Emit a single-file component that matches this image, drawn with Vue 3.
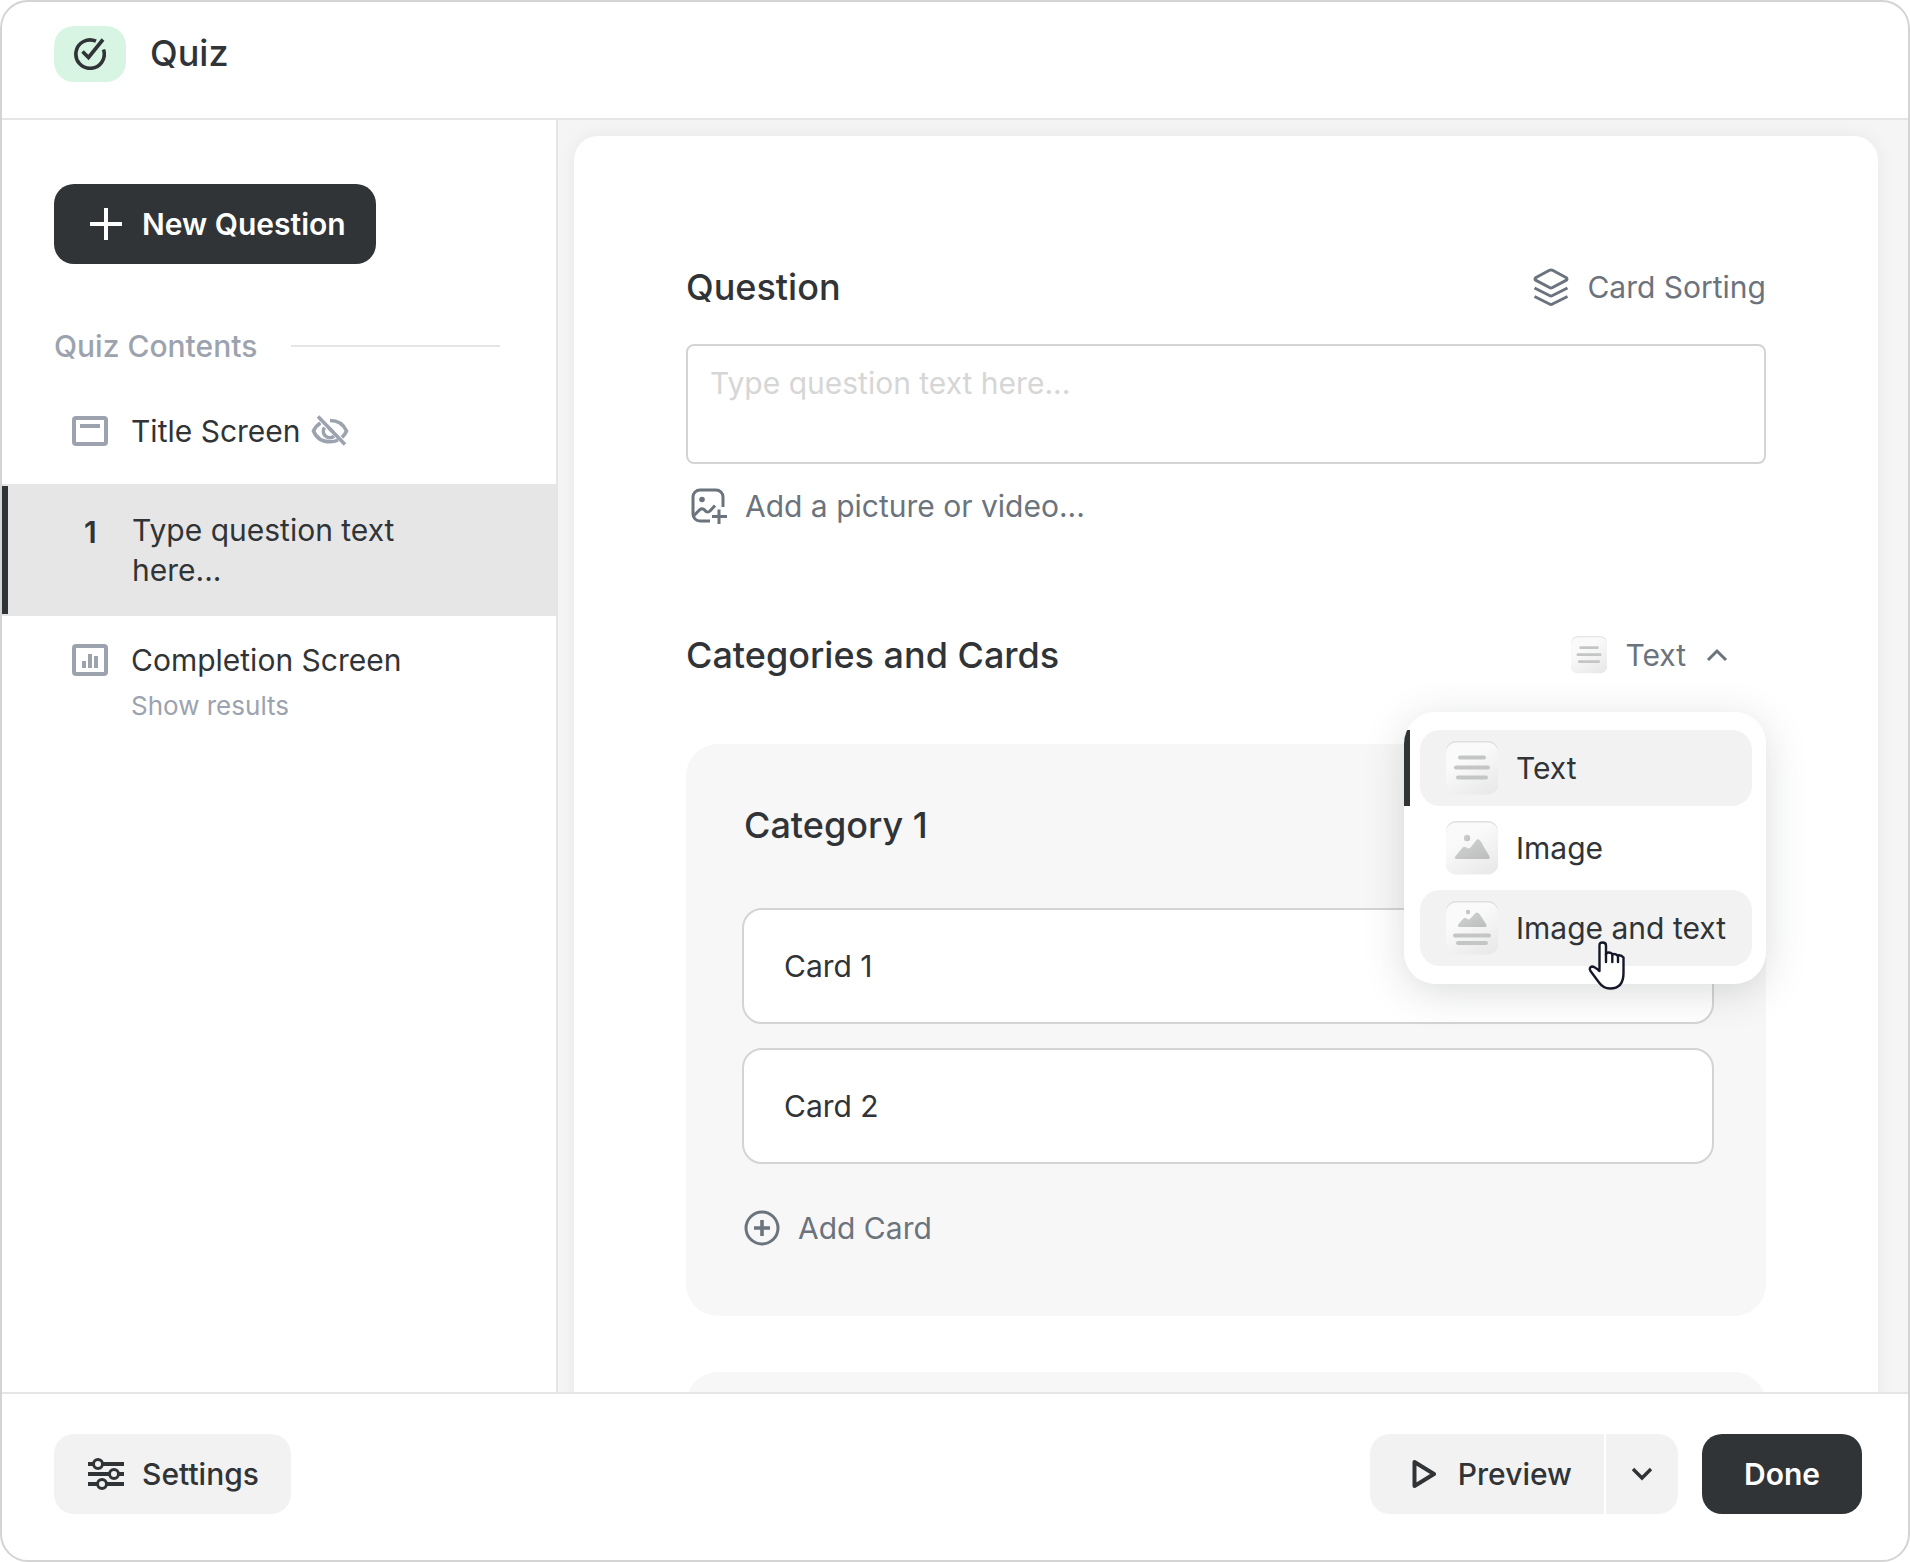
<script setup>
import { ref } from 'vue'

const questionText = ref('')
const cards = ref(['Card 1', 'Card 2'])
const modes = [
  { id: 'text', label: 'Text' },
  { id: 'image', label: 'Image' },
  { id: 'both', label: 'Image and text' },
]
const selectedMode = ref('text')
const hoveredMode = ref('both')
</script>

<template>
  <div class="app">
    <svg class="defs" aria-hidden="true">
      <defs>
        <linearGradient id="tile" x1="0.2" y1="0" x2="0.8" y2="1">
          <stop offset="0.3" stop-color="#fafafa" />
          <stop offset="1" stop-color="#e9e9e9" />
        </linearGradient>
        <linearGradient id="ink" x1="0" y1="0" x2="1" y2="1">
          <stop offset="0" stop-color="#d2d4d3" />
          <stop offset="1" stop-color="#bcbebd" />
        </linearGradient>
        <g id="tile-bg">
          <rect x="0" y="0" width="52" height="53" rx="10" fill="#dfdfdf" />
          <rect x="0" y="1.500" width="52" height="52" rx="10" fill="url(#tile)" />
        </g>
        <g id="tile-text" fill="#c4c6c5">
          <rect x="12" y="14.500" width="28" height="4" rx="2" />
          <rect x="8" y="24.500" width="36" height="4" rx="2" />
          <rect x="10" y="34.500" width="32" height="4" rx="2" />
        </g>
        <g id="tile-image" fill="url(#ink)">
          <circle cx="21" cy="17" r="3.2" />
          <path d="M10.500 38C9 38 8.400 36.800 9.200 35.600L16 27.300Q18 25 20 26.300Q23 28.800 25 26L30 19.500Q32 17 34 19.500Q36 21.500 37 24.500L43 34.500Q45 38 42 38Z" />
        </g>
        <g id="tile-both">
          <circle cx="22" cy="11" r="2.200" fill="#c4c6c5" />
          <path fill="url(#ink)" d="M13.500 26Q11 26 12.500 23L17.500 17.500Q19 16 20.500 17.500Q23 19.500 25 17L29.500 12Q31.500 10.500 33.500 13L40 23Q41.500 26 39 26Z" />
          <rect x="7" y="32.500" width="38" height="4" rx="2" fill="#c4c6c5" />
          <rect x="10" y="40" width="32" height="4" rx="2" fill="#c4c6c5" />
        </g>
      </defs>
    </svg>

    <header class="topbar">
      <span class="badge">
        <svg width="32" height="32" viewBox="0 0 32 32" fill="none" stroke="#303437" stroke-width="3.600">
          <path d="M22 3.200A14.200 14.200 0 1 0 29.500 11.500" />
          <path d="M8.500 13.500L14.500 19.500L29 1.500" />
        </svg>
      </span>
      <h1>Quiz</h1>
    </header>

    <div class="body">
      <aside class="sidebar">
        <button type="button" class="btn dark new">
          <svg width="32" height="32" viewBox="0 0 32 32" stroke="#fff" stroke-width="4"><path d="M16 0V32M0 16H32" /></svg>
          New Question
        </button>
        <h2 class="contents">Quiz Contents</h2>
        <nav>
          <a href="#title" class="item">
            <span class="lead">
              <svg width="36" height="30" viewBox="0 0 36 30" fill="none" stroke="#9ca3af" stroke-width="4">
                <rect x="2" y="2" width="32" height="26" rx="2" /><path d="M8 10H28" />
              </svg>
            </span>
            <span class="label">Title Screen</span>
            <svg class="eye" width="38" height="32" viewBox="0 0 38 32" fill="none" stroke="#9ca3af" stroke-width="3.600">
              <path d="M19 5.500C28 5.500 33 10.500 35.500 16C34.500 18.500 33 20.500 31 22.500" />
              <path d="M9.500 8C6 10.200 3.800 13 2.500 16C5 22 10.500 26.800 19 26.800C22 26.800 24.800 26.200 27 25" />
              <path d="M13.500 12.500A6.500 6.500 0 0 0 23 21.200" />
              <path d="M18 13L22 17" />
              <path d="M7 1.500L34 29.500" />
            </svg>
          </a>
          <a href="#q1" class="item current">
            <span class="lead num">1</span>
            <span class="label">Type question text here...</span>
          </a>
          <a href="#done" class="item">
            <span class="lead">
              <svg width="36" height="32" viewBox="0 0 36 32" fill="none" stroke="#9ca3af" stroke-width="4">
                <rect x="2" y="2" width="32" height="28" rx="2" /><path d="M12 17V24M18 10V24M24 12V24" />
              </svg>
            </span>
            <span class="label">Completion Screen<small>Show results</small></span>
          </a>
        </nav>
      </aside>

      <main class="main">
        <div class="panel">
          <div class="row">
            <label class="title" for="question">Question</label>
            <button type="button" class="link">
              <svg width="36" height="38" viewBox="0 0 36 38" fill="none" stroke="#6b737d" stroke-width="3" stroke-linejoin="round">
                <path d="M16.500 2.300Q18 1.500 19.500 2.300L33 9.500Q35 11 33 12.400L19.500 19.500Q18 20.300 16.500 19.500L3 12.400Q1 11 3 9.500Z" />
                <path d="M1.500 20L16.500 27.500Q18 28.300 19.500 27.500L34.500 20" />
                <path d="M1.500 28.500L16.500 36Q18 36.800 19.500 36L34.500 28.500" />
              </svg>
              Card Sorting
            </button>
          </div>
          <textarea id="question" v-model="questionText" placeholder="Type question text here..."></textarea>
          <button type="button" class="link media">
            <svg width="36" height="36" viewBox="0 0 36 36" fill="none" stroke="#6b737d" stroke-width="3">
              <path d="M19 33H9A7 7 0 0 1 2 26V9A7 7 0 0 1 9 2H25A7 7 0 0 1 32 9V19" />
              <path d="M3 27.500L9 21.500Q11 20 13 21.500L15 23.500Q17 24.800 19 23L24 17.500" />
              <circle cx="11" cy="11.500" r="2.800" fill="#6b737d" stroke="none" />
              <path d="M28 21.500V36M21 28.500H36" />
            </svg>
            Add a picture or video...
          </button>

          <div class="row second">
            <h2 class="title">Categories and Cards</h2>
            <div class="picker">
              <button type="button" class="link toggle" aria-haspopup="listbox" aria-expanded="true">
                <svg width="36" height="38" viewBox="0 0 52 54"><use href="#tile-bg" /><use href="#tile-text" /></svg>
                Text
                <svg class="caret" width="22" height="14" viewBox="0 0 22 14" fill="none" stroke="#6b737d" stroke-width="3"><path d="M2 12L11 3L20 12" /></svg>
              </button>
              <div class="popup">
                <ul class="menu">
                  <li v-for="m in modes" :key="m.id" :class="{ selected: m.id === selectedMode }">
                    <button
                      type="button"
                      class="option"
                      :class="{ lit: m.id === selectedMode || m.id === hoveredMode }"
                      @click="selectedMode = m.id"
                      @mouseenter="hoveredMode = m.id"
                    >
                      <svg width="52" height="54" viewBox="0 0 52 54"><use href="#tile-bg" /><use :href="'#tile-' + m.id" /></svg>
                      {{ m.label }}
                    </button>
                  </li>
                </ul>
                <svg class="pointer" width="38" height="49" viewBox="0 0 38 49" fill="#fff" stroke="#15172b" stroke-width="2.400" stroke-linejoin="round" stroke-linecap="round">
                  <path d="M11.500 27.500V4.500Q11.500 1.500 14.500 1.500Q18 1.500 18 4.500V13.500Q18 11.500 20.500 11.500Q23.500 11.500 24.500 13.500Q27 12.300 29.500 14.500Q33 13.500 35.500 16.500V32Q35.500 47.500 22 47.500Q15.500 47.500 11 41.500L2.500 30Q0.500 26.500 4 25.500Q6.500 25.500 11.500 30Z" />
                  <path d="M18 13V21M24.300 14V21M30 15V21" fill="none" />
                </svg>
              </div>
            </div>
          </div>

          <section class="category">
            <h3 class="title">Category 1</h3>
            <div class="cards">
              <input v-for="(c, i) in cards" :key="i" v-model="cards[i]" type="text" class="card" :aria-label="'Card ' + (i + 1) + ' text'" />
            </div>
            <button type="button" class="link">
              <svg width="36" height="36" viewBox="0 0 36 36" fill="none" stroke="#6b737d" stroke-width="3"><circle cx="18" cy="18" r="16" /><path d="M18 10V26M10 18H26" stroke-width="3.600" /></svg>
              Add Card
            </button>
          </section>
          <section class="category"></section>
        </div>
      </main>
    </div>

    <footer class="bottombar">
      <button type="button" class="btn settings">
        <svg width="36" height="32" viewBox="0 0 36 32" stroke="#303437" stroke-width="4">
          <path d="M0 6H36M0 16H36M0 26H36" />
          <g fill="#f2f2f2" stroke-width="3"><circle cx="10" cy="6" r="4.500" /><circle cx="26" cy="16" r="4.500" /><circle cx="14" cy="26" r="4.500" /></g>
        </svg>
        Settings
      </button>
      <div class="actions">
        <div class="split">
          <button type="button" class="btn preview">
            <svg width="24" height="30" viewBox="0 0 24 30" fill="none" stroke="#303437" stroke-width="4" stroke-linejoin="round"><path d="M2.500 3V27L22 15Z" /></svg>
            Preview
          </button>
          <button type="button" class="btn more" aria-label="Preview options">
            <svg width="22" height="14" viewBox="0 0 22 14" fill="none" stroke="#303437" stroke-width="3.400"><path d="M2 2L11 11L20 2" /></svg>
          </button>
        </div>
        <button type="button" class="btn dark finish">Done</button>
      </div>
    </footer>
  </div>
</template>

<style>
body {
  background: #fff;
}
</style>

<style scoped>
.app,
.app * {
  box-sizing: border-box;
}
.app {
  display: flex;
  flex-direction: column;
  height: 100vh;
  border: 2px solid #d4d4d4;
  border-radius: 28px;
  overflow: hidden;
  background: #fff;
  color: #303437;
  font-family: Inter, "Liberation Sans", sans-serif;
  font-size: 30px;
  line-height: 40px;
}
.defs {
  position: absolute;
  width: 0;
  height: 0;
}
h1,
h2,
h3,
ul {
  margin: 0;
  padding: 0;
  list-style: none;
}
svg {
  flex: none;
  display: block;
}
button {
  display: flex;
  align-items: center;
  border: 0;
  padding: 0;
  background: none;
  color: inherit;
  font: inherit;
  cursor: pointer;
  white-space: nowrap;
}
.topbar {
  display: flex;
  align-items: flex-start;
  gap: 24px;
  padding: 24px 52px 36px;
  border-bottom: 2px solid #e5e5e5;
}
.badge {
  display: flex;
  align-items: center;
  justify-content: center;
  width: 72px;
  height: 56px;
  border-radius: 20px;
  background: #d8f5e4;
}
h1 {
  font-size: 36px;
  font-weight: 500;
  line-height: 54px;
}
.body {
  display: flex;
  flex: 1;
  min-height: 0;
}
.sidebar {
  flex: 0 0 556px;
  border-right: 2px solid #e5e5e5;
  padding-top: 64px;
}
.btn {
  height: 80px;
  border-radius: 20px;
  background: #f2f2f2;
  font-weight: 500;
}
.dark {
  background: #303437;
  color: #fff;
  font-weight: 600;
}
.new {
  gap: 20px;
  margin-left: 52px;
  padding: 0 30px 0 36px;
}
.contents {
  display: flex;
  align-items: center;
  gap: 34px;
  margin: 62px 56px 0 52px;
  color: #9ca3af;
  font-size: 30px;
  font-weight: 500;
}
.contents::after {
  content: "";
  flex: 1;
  height: 2px;
  background: #e5e5e5;
}
.item {
  display: flex;
  align-items: flex-start;
  padding: 24px 40px 24px 70px;
  color: inherit;
  text-decoration: none;
}
.item:first-child {
  padding: 45px 40px 33px 70px;
}
.lead {
  display: flex;
  align-items: center;
  width: 59px;
  height: 40px;
  flex: none;
}
.eye {
  margin: 4px 0 0 10px;
}
.item.current {
  position: relative;
  padding: 26px 120px 26px 70px;
  background: #e6e6e6;
}
.current::before {
  content: "";
  position: absolute;
  inset: 2px auto 2px 0;
  width: 6px;
  background: #303437;
}
.current .num {
  width: 60px;
  height: 44px;
  padding-left: 12px;
  font-weight: 600;
}
small {
  display: block;
  margin-top: 6px;
  color: #9ca3af;
  font-size: 26px;
}
.main {
  flex: 1;
  min-width: 0;
  overflow: hidden;
  padding: 16px 30px 0 16px;
  background: #f5f5f5;
}
.panel {
  min-height: 100%;
  padding: 129px 112px 0;
  border-radius: 24px 24px 0 0;
  background: #fff;
  box-shadow: 0 0 20px rgba(0, 0, 0, 0.06);
}
.row {
  display: flex;
  align-items: center;
  justify-content: space-between;
}
.title {
  font-size: 36px;
  font-weight: 500;
  line-height: 44px;
}
.link {
  gap: 18px;
  color: #6b737d;
}
textarea {
  display: block;
  width: 100%;
  height: 120px;
  margin: 35px 0 22px;
  padding: 17px 22px;
  border: 2px solid #d4d4d4;
  border-radius: 8px;
  color: inherit;
  font: inherit;
  resize: none;
  outline: 0;
}
textarea::placeholder {
  color: #d6d6d6;
}
.media {
  margin-left: 5px;
}
.second {
  margin: 107px 0 67px;
}
.picker {
  position: relative;
}
.toggle {
  padding-right: 38px;
}
.caret {
  margin-left: 2px;
}
.popup {
  position: absolute;
  z-index: 2;
  top: 77px;
  right: 0;
  border-radius: 32px;
  box-shadow: 0 8px 40px rgba(48, 64, 56, 0.18);
}
.menu {
  overflow: hidden;
  display: grid;
  gap: 4px;
  width: 362px;
  padding: 18px 0;
  border-radius: 32px;
  background: #fff;
}
.menu li {
  padding: 0 16px;
}
.selected {
  box-shadow: inset 6px 0 #303437;
}
.option {
  gap: 18px;
  width: 100%;
  height: 76px;
  padding: 0 26px;
  border-radius: 20px;
}
.lit {
  background: #f2f2f2;
}
.pointer {
  position: absolute;
  left: 184px;
  bottom: -6px;
}
.category {
  min-height: 200px;
  margin-bottom: 56px;
  padding: 59px 52px 68px 56px;
  border-radius: 32px;
  background: #f7f7f7;
}
.category .title {
  padding-left: 2px;
}
.cards {
  display: grid;
  gap: 24px;
  margin: 61px 0 44px;
}
.card {
  width: 100%;
  height: 116px;
  padding: 0 40px;
  border: 2px solid #d4d4d4;
  border-radius: 20px;
  background: #fff;
  color: inherit;
  font: inherit;
  outline: 0;
}
.category .link {
  margin-left: 2px;
}
.bottombar {
  display: flex;
  align-items: center;
  justify-content: space-between;
  padding: 40px 46px 46px 52px;
  border-top: 2px solid #e5e5e5;
}
.actions,
.split {
  display: flex;
}
.actions {
  gap: 24px;
}
.split {
  gap: 2px;
}
.settings {
  gap: 18px;
  padding: 0 32px 0 34px;
}
.preview {
  gap: 22px;
  padding: 0 32px 0 42px;
  border-radius: 20px 0 0 20px;
}
.more {
  justify-content: center;
  width: 72px;
  border-radius: 0 20px 20px 0;
}
.finish {
  padding: 0 42px;
}
</style>
